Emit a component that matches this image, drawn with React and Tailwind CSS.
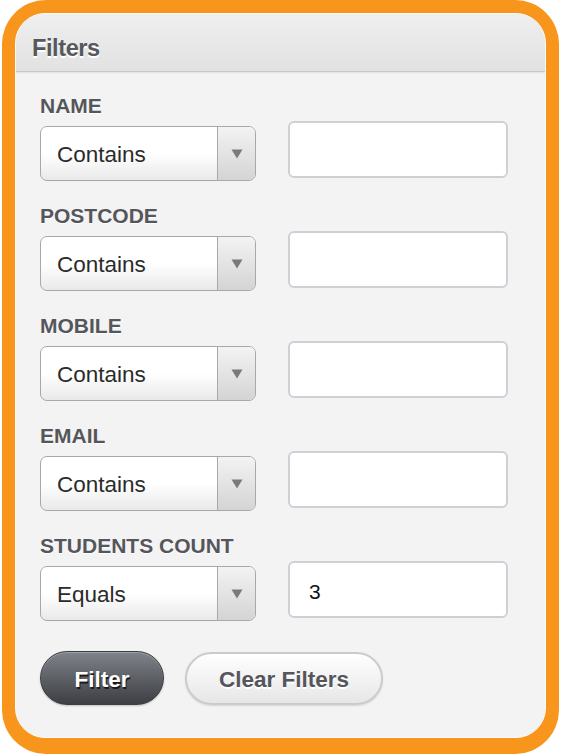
import React from "react";

const font = { fontFamily: '"Liberation Sans", Arial, Helvetica, sans-serif' };

function Select({ value }) {
  return (
    <div className="flex h-[55px] w-[216px] shrink-0 overflow-hidden rounded-[7px] border-[1.5px] border-[#a8a8a8] bg-gradient-to-b from-white via-white to-[#e9e9e9]">
      <div className="flex flex-1 items-center pl-[16px] pt-[2px] text-[22.5px] leading-[26px] text-[#2b2b2b]">
        {value}
      </div>
      <div className="flex w-[38px] items-center justify-center border-l-[1.5px] border-[#a8a8a8] bg-gradient-to-b from-[#f3f3f3] to-[#d4d4d4]">
        <svg width="12" height="10" viewBox="0 0 12 10">
          <polygon points="0.5,0.5 11.5,0.5 6,9.5" fill="#7a7a7a" />
        </svg>
      </div>
    </div>
  );
}

function Input({ value }) {
  return (
    <div className="mt-[-5px] flex h-[57px] w-[220px] shrink-0 items-center rounded-[6px] border-2 border-[#cdd1d6] bg-white pl-[19px] pt-[4px] text-[21px] leading-[24px] text-[#111]">
      {value}
    </div>
  );
}

function Row({ label, op, value }) {
  return (
    <div>
      <div
        className="h-[24px] text-[21px] font-bold leading-[24px] text-[#55565b]"
        style={{ textShadow: "0 1px 0 #ffffff" }}
      >
        {label}
      </div>
      <div className="mt-[8px] flex items-start gap-[32px]">
        <Select value={op} />
        <Input value={value} />
      </div>
    </div>
  );
}

export default function App() {
  return (
    <div className="h-[756px] w-[562px] bg-white" style={font}>
      <div className="ml-[2px] flex h-[754px] w-[557px] flex-col rounded-[44px] bg-[#f8951d] px-[13px] pb-[16px] pt-[13px]">
        <div className="flex flex-1 flex-col overflow-hidden rounded-[30px] border border-[#fbfbfb] bg-[#f3f3f3]">
          <div className="h-[58px] shrink-0 border-b border-[#c8c8c8] bg-gradient-to-b from-[#efefef] to-[#e2e2e2] pl-[16px] pt-[20px] shadow-[0_1px_2px_rgba(0,0,0,0.08)]">
            <div
              className="text-[23.5px] font-bold leading-[28px] tracking-[-0.4px] text-[#57585d]"
              style={{ textShadow: "0 1.5px 0 #ffffff" }}
            >
              Filters
            </div>
          </div>
          <div className="flex flex-col pl-[24px] pr-[37px] pt-[22px]">
            <div className="flex flex-col gap-[23px]">
              <Row label="NAME" op="Contains" value="" />
              <Row label="POSTCODE" op="Contains" value="" />
              <Row label="MOBILE" op="Contains" value="" />
              <Row label="EMAIL" op="Contains" value="" />
              <Row label="STUDENTS COUNT" op="Equals" value="3" />
            </div>
            <div className="mt-[30px] flex items-center gap-[21px]">
              <button
                className="h-[54px] w-[124px] rounded-full border border-[#3b3d41] bg-gradient-to-b from-[#80838a] to-[#3d3f44] pt-[3px] text-[22.5px] font-bold text-white shadow-[inset_0_1px_0_rgba(255,255,255,0.25),0_1px_2px_rgba(0,0,0,0.2)]"
                style={{ textShadow: "1px 1.5px 0 #1a1a1a" }}
              >
                Filter
              </button>
              <button
                className="h-[53px] w-[198px] rounded-full border-2 border-[#cbcbcb] bg-gradient-to-b from-white to-[#e6e6e6] pt-[3px] text-[22.5px] font-bold text-[#55565c] shadow-[0_1px_2px_rgba(0,0,0,0.12)]"
                style={{ textShadow: "0 1.5px 0 #ffffff" }}
              >
                Clear Filters
              </button>
            </div>
          </div>
        </div>
      </div>
    </div>
  );
}
